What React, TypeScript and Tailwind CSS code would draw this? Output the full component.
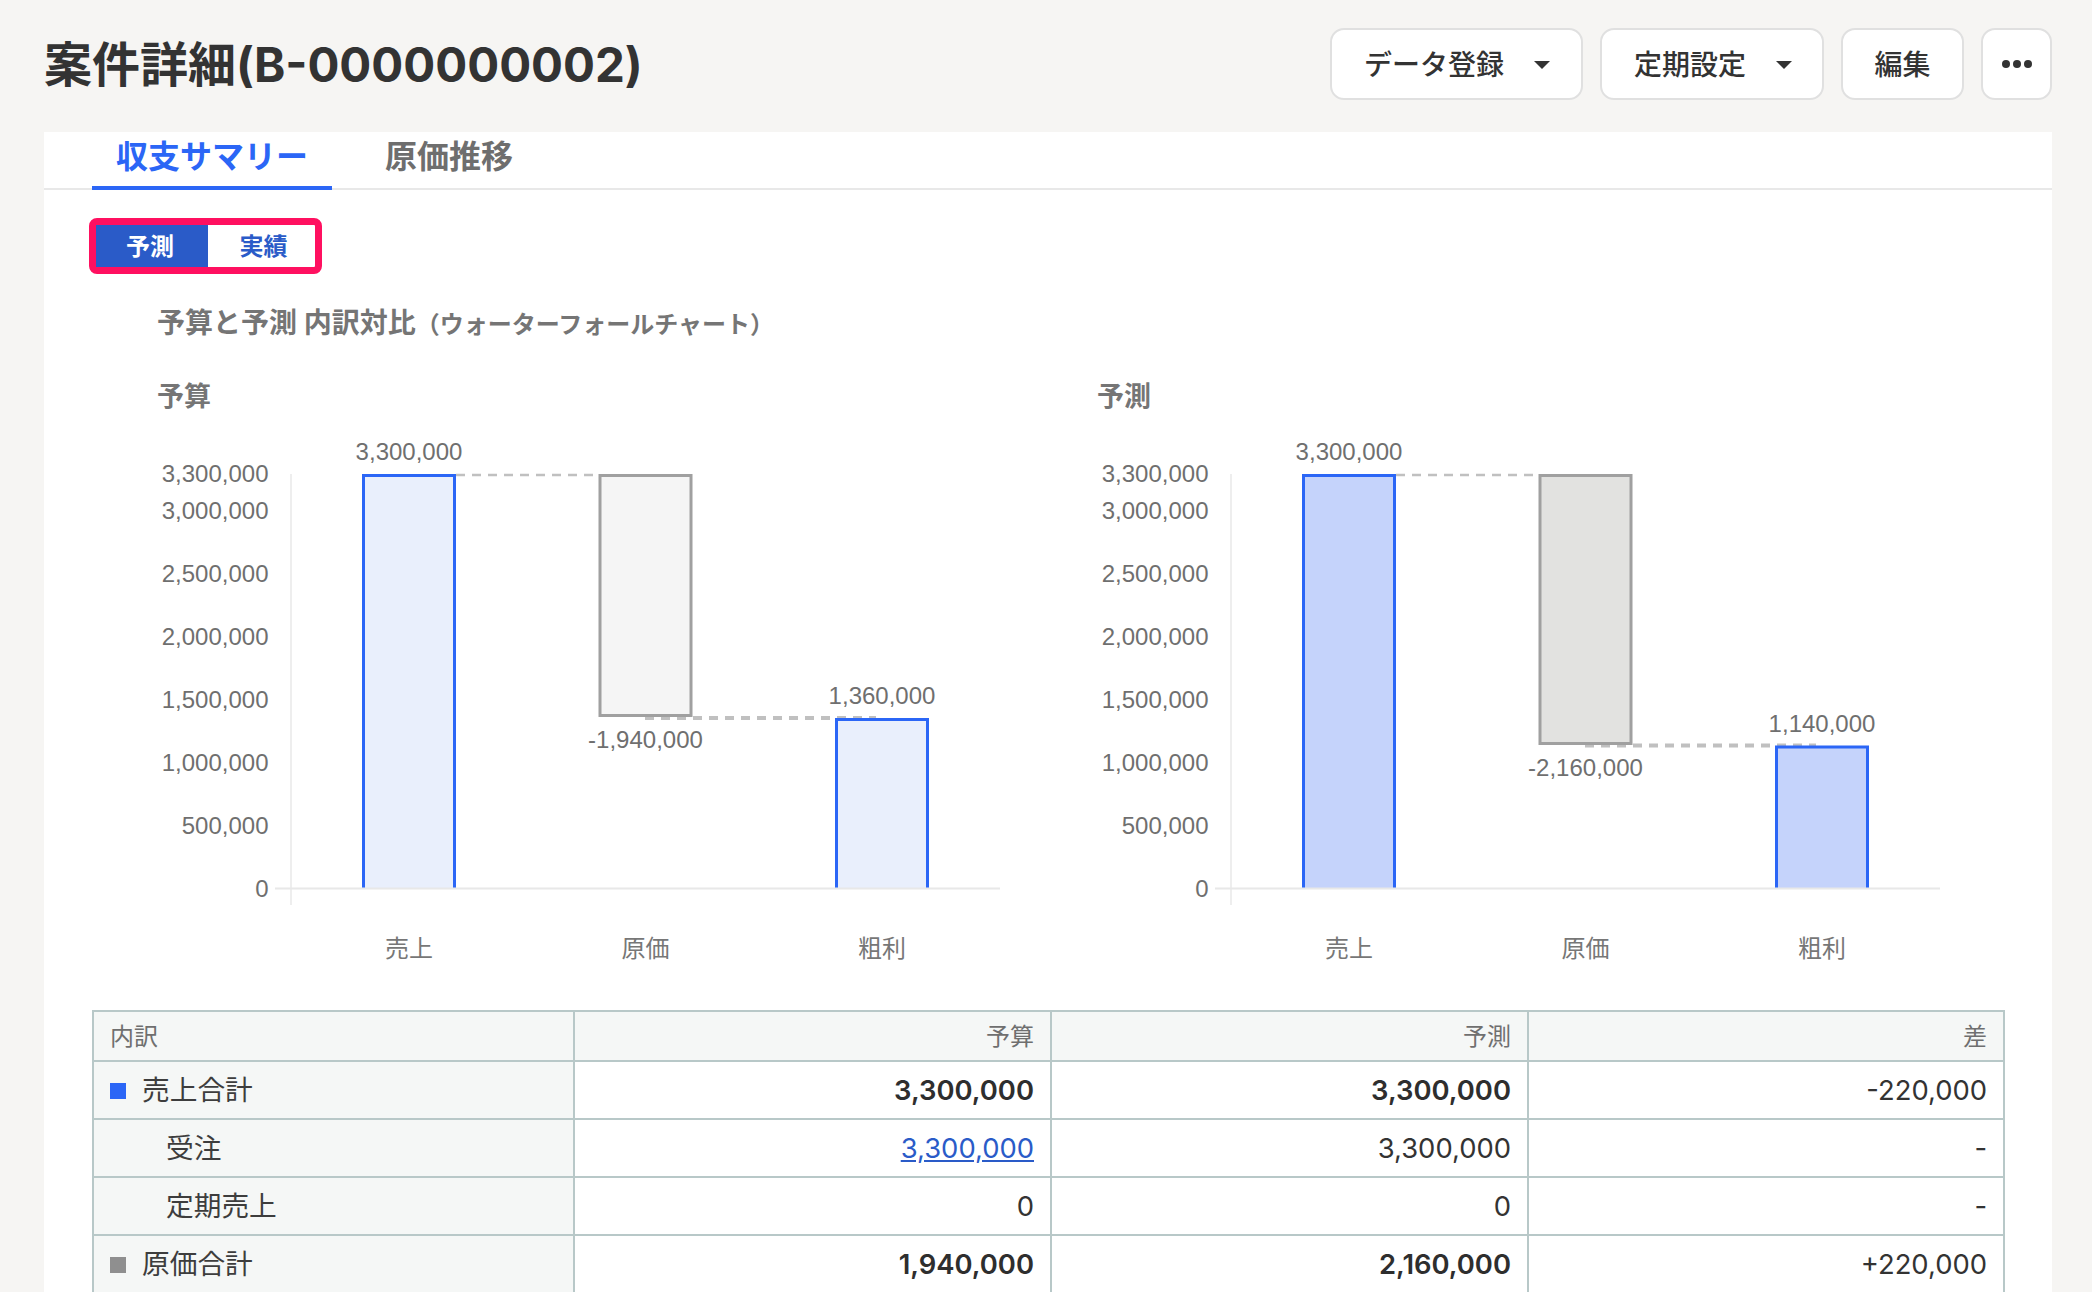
import React from 'react';

const uiFont = "font-['Inter','Noto_Sans_CJK_JP',sans-serif]";

interface ChartProps {
  title: string;
  barFill: string;
  costFill: string;
  costLabel: string;
  profitLabel: string;
  costBottom: number;
  profitTop: number;
}

const yTicks = [
  { label: '3,300,000', y: 54 },
  { label: '3,000,000', y: 91.5 },
  { label: '2,500,000', y: 154 },
  { label: '2,000,000', y: 217 },
  { label: '1,500,000', y: 280 },
  { label: '1,000,000', y: 343 },
  { label: '500,000', y: 406 },
  { label: '0', y: 469 },
];

const categories = [
  { label: '売上', x: 316 },
  { label: '原価', x: 552.5 },
  { label: '粗利', x: 789 },
];

const WaterfallChart: React.FC<ChartProps> = ({ title, barFill, costFill, costLabel, profitLabel, costBottom, profitTop }) => {
  const baseline = 468.6;
  const blue = '#2b66f6';

  return (
    <div className="w-[940px]">
      <div className="h-9 pl-[64px] text-[27px] leading-[37px] font-bold text-[#757575]">{title}</div>
      <svg width="940" height="560" className="mt-1.5 block font-['Liberation_Sans','Noto_Sans_CJK_JP',sans-serif] text-[24px]">
        <line x1="198" y1="54" x2="198" y2="485" stroke="#e8e8e8" strokeWidth="1.5" />

        {yTicks.map((t) => (
          <text key={t.label} x="175.5" y={t.y} dy="0.32em" textAnchor="end" fill="#6f6f6f">{t.label}</text>
        ))}

        {/* connectors */}
        <line x1="363" y1="55" x2="506" y2="55" stroke="#c0c0c0" strokeWidth="2.5" strokeDasharray="9 7" />
        <line x1="552" y1={profitTop - 1.4} x2="783" y2={profitTop - 1.4} stroke="#c0c0c0" strokeWidth="4" strokeDasharray="9 7" />

        {/* bars */}
        <path d={`M270.5 ${baseline} V55.5 H361.5 V${baseline}`} fill={barFill} stroke={blue} strokeWidth="3" />
        <rect x="507" y="55.5" width="91" height={costBottom - 55.5} fill={costFill} stroke="#a0a0a0" strokeWidth="3" />
        <path d={`M743.5 ${baseline} V${profitTop} H834.5 V${baseline}`} fill={barFill} stroke={blue} strokeWidth="3" />

        <line x1="182" y1={baseline} x2="907" y2={baseline} stroke="#e8e8e8" strokeWidth="2" />

        {/* value labels */}
        <text x="316" y="32" dy="0.32em" textAnchor="middle" fill="#6f6f6f">3,300,000</text>
        <text x="552.5" y={costBottom + 25} dy="0.32em" textAnchor="middle" fill="#6f6f6f">{costLabel}</text>
        <text x="789" y={profitTop - 23} dy="0.32em" textAnchor="middle" fill="#6f6f6f">{profitLabel}</text>

        {categories.map((c) => (
          <text key={c.label} x={c.x} y="528" dy="0.36em" textAnchor="middle" fill="#777777">{c.label}</text>
        ))}
      </svg>
    </div>
  );
};

const Caret = () => (
  <svg width="16" height="8" viewBox="0 0 16 8" className="block">
    <path d="M0 0 H16 L8 8 Z" fill="#333333" />
  </svg>
);

interface RowProps {
  label: string;
  marker?: string;
  budget: React.ReactNode;
  forecast: string;
  diff: string;
  strong?: boolean;
}

const Row: React.FC<RowProps> = ({ label, marker, budget, forecast, diff, strong }) => {
  const num = `h-[58px] border-2 border-[#b8c8c8] pt-[2px] pr-[16px] text-right text-[27.4px] ${strong ? 'font-semibold text-[#2e2e2e]' : 'font-normal text-[#333333]'}`;
  return (
    <tr>
      <td className="h-[58px] border-2 border-[#b8c8c8] bg-[#f5f7f6] pt-[2px] text-[27.7px] text-[#3d3d3d]">
        {marker ? (
          <div className="flex items-center pl-[16px]">
            <span className="h-4 w-4" style={{ backgroundColor: marker }} />
            <span className="ml-4">{label}</span>
          </div>
        ) : (
          <div className="pl-[72px]">{label}</div>
        )}
      </td>
      <td className={num}>{budget}</td>
      <td className={num}>{forecast}</td>
      <td className="h-[58px] border-2 border-[#b8c8c8] pt-[2px] pr-[16px] text-right text-[27.4px] font-normal text-[#333333]">{diff}</td>
    </tr>
  );
};

export default function App() {
  return (
    <div className={`h-[1292px] w-[2092px] overflow-hidden bg-[#f6f5f3] ${uiFont}`}>
      <header className="flex h-[132px] items-start justify-between pl-[44px] pr-[40px] pt-[28px]">
        <h1 className="text-[48px] leading-[74px] font-bold text-[#333333]">
          案件詳細<span className="text-[47.4px]">(B-0000000002)</span>
        </h1>
        <div className="flex gap-[17px] text-[28px] font-medium text-[#333333]">
          <button className="flex h-[72px] w-[253px] items-center gap-[30px] rounded-[14px] border-2 border-[#e0e0e0] bg-white pt-[2px] pl-[32px]">
            データ登録
            <Caret />
          </button>
          <button className="flex h-[72px] w-[224px] items-center gap-[30px] rounded-[14px] border-2 border-[#e0e0e0] bg-white pt-[2px] pl-[32px]">
            定期設定
            <Caret />
          </button>
          <button className="flex h-[72px] w-[123px] items-center justify-center rounded-[14px] border-2 border-[#e0e0e0] bg-white pt-[2px]">編集</button>
          <button className="flex h-[72px] w-[71px] items-center justify-center gap-[3px] rounded-[14px] border-2 border-[#e0e0e0] bg-white">
            <span className="h-2 w-2 rounded-full bg-[#333333]" />
            <span className="h-2 w-2 rounded-full bg-[#333333]" />
            <span className="h-2 w-2 rounded-full bg-[#333333]" />
          </button>
        </div>
      </header>

      <main className="mr-[40px] ml-[44px] h-[1160px] bg-white">
        <div className="flex h-[58px] gap-[29px] border-b-2 border-[#e8e8e8] pl-[48px] text-[32px] font-bold">
          <div className="h-[58px] border-b-4 border-[#2b66f6] px-[24px] leading-[49px] text-[#2b66f6]">収支サマリー</div>
          <div className="px-[24px] leading-[49px] text-[#6e6e6e]">原価推移</div>
        </div>

        <div className="mt-[28px] ml-[45px] flex w-[233px] rounded-[8px] border-[7px] border-[#ff1060] text-[24px] font-bold">
          <div className="flex h-[42px] w-[112px] items-center justify-center bg-[#2a5bc8] pt-[2px] pr-1 text-white">予測</div>
          <div className="flex h-[42px] flex-1 items-center justify-center pt-[2px] pl-1 text-[#2a5bc8]">実績</div>
        </div>

        <div className="mt-[31px] ml-[113px] h-9 text-[28px] leading-9 font-bold text-[#757575]">
          予算と予測 内訳対比<span className="text-[24px]">（ウォーターフォールチャート）</span>
        </div>

        <div className="mt-[37px] ml-[49px] flex">
          <WaterfallChart title="予算" barFill="#e9effc" costFill="#f5f5f5" costLabel="-1,940,000" profitLabel="1,360,000" costBottom={295.5} profitTop={299.5} />
          <WaterfallChart title="予測" barFill="#c5d3fb" costFill="#e2e2e0" costLabel="-2,160,000" profitLabel="1,140,000" costBottom={323.5} profitTop={327} />
        </div>

        <table className="mt-[30px] ml-[48px] w-[1911px] table-fixed border-collapse">
          <colgroup>
            <col className="w-[481px]" />
            <col className="w-[477px]" />
            <col className="w-[477px]" />
            <col className="w-[476px]" />
          </colgroup>
          <thead>
            <tr className="bg-[#f5f7f6] text-[24px] font-normal text-[#6f6f6f]">
              <th className="h-[50px] border-2 border-[#b8c8c8] pt-[2px] pl-[16px] text-left font-normal">内訳</th>
              <th className="h-[50px] border-2 border-[#b8c8c8] pt-[2px] pr-[16px] text-right font-normal">予算</th>
              <th className="h-[50px] border-2 border-[#b8c8c8] pt-[2px] pr-[16px] text-right font-normal">予測</th>
              <th className="h-[50px] border-2 border-[#b8c8c8] pt-[2px] pr-[16px] text-right font-normal">差</th>
            </tr>
          </thead>
          <tbody>
            <Row label="売上合計" marker="#2b66f6" budget="3,300,000" forecast="3,300,000" diff="-220,000" strong />
            <Row label="受注" budget={<a className="text-[#2a5bc8] underline">3,300,000</a>} forecast="3,300,000" diff="-" />
            <Row label="定期売上" budget="0" forecast="0" diff="-" />
            <Row label="原価合計" marker="#8f8f8f" budget="1,940,000" forecast="2,160,000" diff="+220,000" strong />
          </tbody>
        </table>
      </main>
    </div>
  );
}
